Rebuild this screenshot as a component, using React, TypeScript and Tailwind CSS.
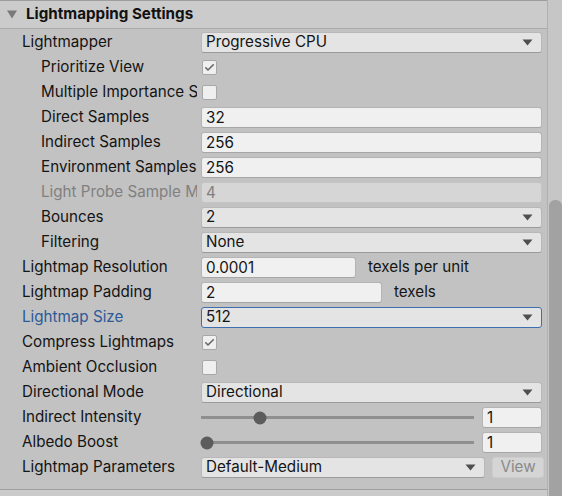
import React from "react";

const Arrow = () => (
  <svg width="11" height="7" viewBox="0 0 11 7" className="shrink-0">
    <path d="M0.5 0.5 L10.5 0.5 L5.5 6.5 Z" fill="#4f4f4f" />
  </svg>
);

const Check = () => (
  <svg width="11" height="9" viewBox="0 0 11 9">
    <path d="M1.8 4.8 L4 7 L9.3 1.8" stroke="#666" strokeWidth="1.6" fill="none" strokeLinejoin="round" strokeLinecap="round" />
  </svg>
);

function Row({ label, nested, children, labelClass }: { label: string; nested?: boolean; children?: React.ReactNode; labelClass?: string }) {
  return (
    <div className="flex h-[25px] items-center">
      <div className={`mr-[4px] w-[197px] shrink-0 overflow-hidden whitespace-nowrap ${nested ? "pl-[41px]" : "pl-[22px]"} ${labelClass ?? "text-[#141414]"}`}>
        {label}
      </div>
      <div className="flex flex-1 items-center pr-[5px]">{children}</div>
    </div>
  );
}

function Input({ value, className }: { value: string; className?: string }) {
  return (
    <div className={`h-[21px] rounded-[3px] border border-[#b4b4b4] border-b-[#a6a6a6] bg-[#f0f0f0] px-[4px] leading-[19px] text-[#141414] ${className ?? "flex-1"}`}>
      {value}
    </div>
  );
}

function Dropdown({ value, className, focus }: { value: string; className?: string; focus?: boolean }) {
  return (
    <div
      className={`flex h-[21px] items-center justify-between rounded-[3px] border ${focus ? "border-[#3d6fb0]" : "border-[#b8b8b8] border-b-[#9a9a9a]"} bg-[#e4e4e4] pl-[4px] pr-[8px] text-[#141414] ${className ?? "flex-1"}`}
    >
      <span>{value}</span>
      <Arrow />
    </div>
  );
}

function Checkbox({ checked }: { checked?: boolean }) {
  return (
    <div className="ml-[1px] flex h-[15px] w-[15px] items-center justify-center rounded-[2px] border border-[#a8a8a8] bg-[#efefef]">
      {checked && <Check />}
    </div>
  );
}

function Slider({ pos, value }: { pos: number; value: string }) {
  return (
    <>
      <div className="relative mr-[8px] flex h-[21px] flex-1 items-center">
        <div className="h-[3px] w-full bg-[#8f8f8f]" />
        <div
          className="absolute top-1/2 h-[13px] w-[13px] -translate-x-1/2 -translate-y-1/2 rounded-full bg-[#5c5c5c]"
          style={{ left: pos }}
        />
      </div>
      <Input value={value} className="w-[60px] shrink-0" />
    </>
  );
}

export default function App() {
  return (
    <div
      className="flex h-[496px] w-[562px] overflow-hidden bg-[#c2c2c2] text-[15.2px]"
      style={{ fontFamily: "Inter, 'Noto Sans', sans-serif" }}
    >
      <div className="flex w-[547px] shrink-0 flex-col">
        <div className="flex h-[29px] shrink-0 items-center border-t border-b border-t-[#9e9e9e] border-b-[#aaaaaa] bg-[#cbcbcb] pl-[7px]">
          <svg width="10" height="9" viewBox="0 0 10 9" className="mr-[9px]">
            <path d="M0 0.5 L10 0.5 L5 8.5 Z" fill="#7a7a7a" />
          </svg>
          <span className="font-bold text-[#111]">Lightmapping Settings</span>
        </div>
        <div className="pt-[1px]">
          <Row label="Lightmapper">
            <Dropdown value="Progressive CPU" />
          </Row>
          <Row label="Prioritize View" nested>
            <Checkbox checked />
          </Row>
          <Row label="Multiple Importance Sampling" nested>
            <Checkbox />
          </Row>
          <Row label="Direct Samples" nested>
            <Input value="32" />
          </Row>
          <Row label="Indirect Samples" nested>
            <Input value="256" />
          </Row>
          <Row label="Environment Samples" nested>
            <Input value="256" />
          </Row>
          <Row label="Light Probe Sample Multiplier" nested labelClass="text-[#808080]">
            <div className="h-[21px] flex-1 rounded-[3px] border border-[#c4c4c4] bg-[#d6d6d6] px-[4px] leading-[19px] text-[#808080]">4</div>
          </Row>
          <Row label="Bounces" nested>
            <Dropdown value="2" />
          </Row>
          <Row label="Filtering" nested>
            <Dropdown value="None" />
          </Row>
          <Row label="Lightmap Resolution">
            <Input value="0.0001" className="w-[155px] shrink-0" />
            <span className="ml-[12px] text-[#141414]">texels per unit</span>
          </Row>
          <Row label="Lightmap Padding">
            <Input value="2" className="w-[181px] shrink-0" />
            <span className="ml-[12px] text-[#141414]">texels</span>
          </Row>
          <Row label="Lightmap Size" labelClass="text-[#2c5a98]">
            <Dropdown value="512" focus />
          </Row>
          <Row label="Compress Lightmaps">
            <Checkbox checked />
          </Row>
          <Row label="Ambient Occlusion">
            <Checkbox />
          </Row>
          <Row label="Directional Mode">
            <Dropdown value="Directional" />
          </Row>
          <Row label="Indirect Intensity">
            <Slider pos={59} value="1" />
          </Row>
          <Row label="Albedo Boost">
            <Slider pos={6} value="1" />
          </Row>
          <Row label="Lightmap Parameters">
            <Dropdown value="Default-Medium" className="w-[284px] shrink-0" />
            <div className="ml-[7px] flex h-[21px] w-[52px] items-center justify-center rounded-[3px] border border-[#cdcdcd] bg-[#d5d5d5] text-[#8a8a8a]">View</div>
          </Row>
        </div>
        <div className="mt-[9px] flex-1 border-t border-[#9e9e9e] bg-[#cbcbcb]" />
      </div>
      <div className="flex w-[15px] shrink-0 flex-col border-l border-[#b0b0b0] bg-[#c6c6c6]">
        <div className="mt-[200px] ml-[1px] flex-1 rounded-t-[6px] bg-[#a2a2a2]" />
      </div>
    </div>
  );
}
